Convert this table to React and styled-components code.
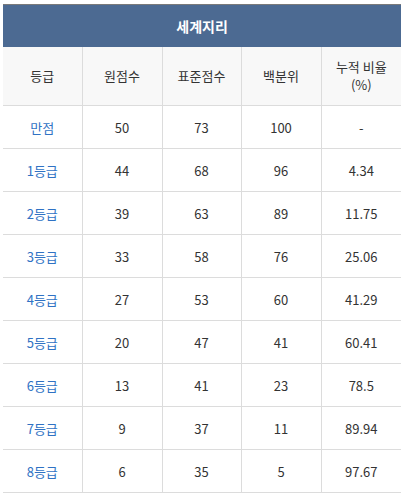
import React from "react";
import styled, { createGlobalStyle } from "styled-components";

const Global = createGlobalStyle`
  html, body { margin: 0; padding: 0; background: #fff; }
  body { font-family: "Noto Sans CJK KR", "Noto Sans", sans-serif; }
`;

const Wrap = styled.div`
  padding: 4px 3px 0 3px;
  width: 398px;
`;

const Table = styled.table`
  width: 398px;
  border-collapse: collapse;
  table-layout: fixed;
  border-top: 1px solid #7a7a7a;
  font-size: 13px;
  color: #333;
`;

const Title = styled.th`
  background: #4c6a92;
  color: #fff;
  font-weight: bold;
  font-size: 14px;
  height: 42px;
  padding: 0;
  text-align: center;
`;

const HeadCell = styled.th`
  background: #f8f8f8;
  font-weight: normal;
  height: 58px;
  padding: 0 4px;
  text-align: center;
  line-height: 18px;
  border-bottom: 1px solid #dcdcdc;
  border-left: ${(p) => (p.$first ? "none" : "1px solid #dcdcdc")};
`;

const Cell = styled.td`
  height: 42px;
  padding: 0;
  text-align: center;
  border-bottom: 1px solid #dcdcdc;
  border-left: ${(p) => (p.$first ? "none" : "1px solid #dcdcdc")};
  color: ${(p) => (p.$link ? "#2f72c4" : "#333")};
`;

const rows = [
  ["만점", "50", "73", "100", "-"],
  ["1등급", "44", "68", "96", "4.34"],
  ["2등급", "39", "63", "89", "11.75"],
  ["3등급", "33", "58", "76", "25.06"],
  ["4등급", "27", "53", "60", "41.29"],
  ["5등급", "20", "47", "41", "60.41"],
  ["6등급", "13", "41", "23", "78.5"],
  ["7등급", "9", "37", "11", "89.94"],
  ["8등급", "6", "35", "5", "97.67"],
];

const widths = [79, 80, 79, 80, 80];

export default function App() {
  return (
    <Wrap>
      <Global />
      <Table>
        <colgroup>
          {widths.map((w, i) => (
            <col key={i} style={{ width: w }} />
          ))}
        </colgroup>
        <thead>
          <tr>
            <Title colSpan={5}>세계지리</Title>
          </tr>
          <tr>
            <HeadCell $first>등급</HeadCell>
            <HeadCell>원점수</HeadCell>
            <HeadCell>표준점수</HeadCell>
            <HeadCell>백분위</HeadCell>
            <HeadCell>
              누적 비율
              <br />
              (%)
            </HeadCell>
          </tr>
        </thead>
        <tbody>
          {rows.map((r) => (
            <tr key={r[0]}>
              {r.map((v, i) => (
                <Cell key={i} $first={i === 0} $link={i === 0}>
                  {v}
                </Cell>
              ))}
            </tr>
          ))}
        </tbody>
      </Table>
    </Wrap>
  );
}
